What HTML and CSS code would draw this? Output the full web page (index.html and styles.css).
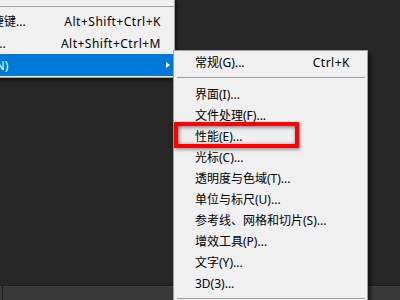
FILE: index.html
```html
<!DOCTYPE html>
<html lang="zh-CN">
<head>
<meta charset="utf-8">
<title>首选项</title>
<link rel="stylesheet" href="styles.css">
</head>
<body>
<div class="workspace"></div>
<div class="statusbar"><div class="divider"></div></div>

<div class="menu main-menu">
  <div class="sep"></div>
  <div class="item"><span class="label">键盘快捷键...</span><span class="key">Alt+Shift+Ctrl+K</span><span class="arrow-cell"></span></div>
  <div class="item"><span class="label">菜单(U)...</span><span class="key">Alt+Shift+Ctrl+M</span><span class="arrow-cell"></span></div>
  <div class="item active"><span class="label">首选项(N)</span><span class="key"></span><span class="arrow-cell"><span class="arrow"></span></span></div>
</div>

<div class="menu sub-menu">
  <div class="item"><span class="label">常规(G)...</span><span class="key">Ctrl+K</span><span class="arrow-cell"></span></div>
  <div class="sep"></div>
  <div class="item"><span class="label">界面(I)...</span></div>
  <div class="item"><span class="label">文件处理(F)...</span></div>
  <div class="item"><span class="label">性能(E)...</span></div>
  <div class="item"><span class="label">光标(C)...</span></div>
  <div class="item"><span class="label">透明度与色域(T)...</span></div>
  <div class="item"><span class="label">单位与标尺(U)...</span></div>
  <div class="item"><span class="label">参考线、网格和切片(S)...</span></div>
  <div class="item"><span class="label">增效工具(P)...</span></div>
  <div class="item"><span class="label">文字(Y)...</span></div>
  <div class="item"><span class="label">3D(3)...</span></div>
  <div class="sep"></div>
  <div class="highlight-box"></div>
</div>
</body>
</html>
```

FILE: styles.css
```css
html, body {
  margin: 0;
  padding: 0;
  width: 400px;
  height: 300px;
  overflow: hidden;
}
body {
  background: #262626;
  display: flex;
  flex-direction: column;
  font-family: "Noto Sans", "Noto Sans CJK SC", sans-serif;
  font-size: 12px;
  color: #000;
  position: relative;
}
.workspace {
  flex: 1;
  background: #262626;
}
.statusbar {
  height: 14px;
  border-top: 1px solid #1c1c1c;
  box-shadow: inset 0 1px 0 #404040;
  background: #383838;
  display: flex;
  padding-left: 2px;
  flex: none;
}
.statusbar .divider {
  width: 1px;
  background: #1e1e1e;
}
.menu {
  position: absolute;
  background: #f0f0f0;
  border: 1px solid #a0a0a0;
  box-shadow: 2px 2px 3px rgba(0,0,0,0.55);
}
.item {
  display: flex;
  align-items: center;
  height: 21px;
  line-height: 21px;
  white-space: nowrap;
}
.label {
  flex: 1;
}
.key {
  text-align: right;
  letter-spacing: 0.5px;
}
.arrow-cell {
  display: flex;
  align-items: center;
}
.sep {
  height: 1px;
  background: #a0a0a0;
}

/* main menu */
.main-menu {
  left: -62px;
  top: -1px;
  width: 235px;
  border-top-color: transparent;
  padding-bottom: 1px;
}
.main-menu .sep {
  margin: 6px 0 3px 0;
}
.main-menu .item {
  height: 22px;
  line-height: 23px;
}
.main-menu .label {
  padding-left: 17px;
}
.main-menu .arrow-cell {
  width: 13px;
}
.main-menu .item.active {
  background: #0078d7;
  color: #fff;
}
.arrow {
  margin-left: 5px;
  width: 0;
  height: 0;
  border-left: 4px solid #fff;
  border-top: 3.5px solid transparent;
  border-bottom: 3.5px solid transparent;
}

/* sub menu */
.sub-menu {
  left: 173px;
  top: 50px;
  width: 193px;
  padding-top: 1px;
  box-shadow: 3px 3px 3px rgba(0,0,0,0.5);
}
.sub-menu .label {
  padding-left: 21px;
}
.sub-menu .arrow-cell {
  width: 17px;
}
.sub-menu .sep {
  margin: 4px 2px 6px 3px;
}
.highlight-box {
  position: absolute;
  left: 0px;
  top: 71px;
  width: 117px;
  height: 18px;
  border: 4px solid #ff0000;
  box-shadow: inset 1px 1px 4px rgba(0,0,0,0.55), 1px 2px 3px rgba(0,0,0,0.35);
}
```
